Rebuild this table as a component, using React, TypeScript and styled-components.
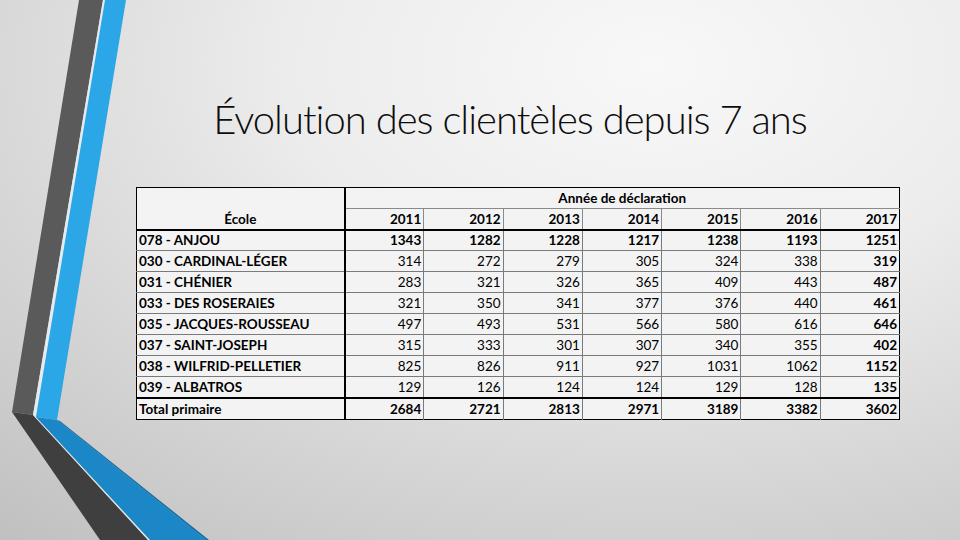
import React from "react";
import styled, { createGlobalStyle } from "styled-components";

const GlobalStyle = createGlobalStyle`
  html, body { margin: 0; padding: 0; }
  body { width: 960px; height: 540px; overflow: hidden; font-family: "Lato", "Liberation Sans", sans-serif; }
`;

const Slide = styled.div`
  position: relative;
  width: 960px;
  height: 540px;
  overflow: hidden;
  background: radial-gradient(ellipse 110% 120% at 68% 12%, #f8f8f8 0%, #ececec 35%, #d6d6d6 65%, #bdbdbd 100%);
`;

const Decor = styled.svg`
  position: absolute;
  left: 0;
  top: 0;
  width: 960px;
  height: 540px;
  pointer-events: none;
`;

const Content = styled.div`
  position: relative;
  margin-left: 136px;
  width: 764px;
  display: flex;
  flex-direction: column;
`;

const Title = styled.h1`
  margin: 0;
  padding: 96px 16px 0 0;
  height: 187px;
  box-sizing: border-box;
  text-align: center;
  font-family: "Lato", "Liberation Sans", sans-serif;
  font-weight: 300;
  font-size: 40px;
  line-height: 46px;
  color: #0d0d0d;
  letter-spacing: -1px;
  white-space: nowrap;
`;

const Table = styled.table`
  border-collapse: collapse;
  width: 764px;
  table-layout: fixed;
  background: #f3f3f3;
  border: 1.5px solid #000;
  font-family: "Lato", "Liberation Sans", sans-serif;
  font-size: 13.5px;
  color: #000;
`;

const HeadRow = styled.tr<{ $h: number }>`
  height: ${(p) => p.$h}px;
`;

const BodyRow = styled.tr<{ $h?: number }>`
  height: ${(p) => p.$h ?? 21}px;
`;

const GroupHead = styled.th`
  padding: 0 2px;
  font-weight: 700;
  text-align: center;
  vertical-align: middle;
  line-height: 18px;
  white-space: nowrap;
`;

const YearHead = styled.th<{ $first?: boolean }>`
  padding: 0 2px;
  font-weight: 700;
  text-align: right;
  vertical-align: middle;
  border-left: ${(p) => (p.$first ? "none" : "1px solid #8a8a8a")};
  border-top: 1px solid #8a8a8a;
  line-height: 18px;
  white-space: nowrap;
`;

const NameHead = styled.th`
  padding: 0 2px 1px;
  font-weight: 700;
  text-align: center;
  vertical-align: bottom;
  border-right: 2px solid #000;
  line-height: 18px;
`;

const Td = styled.td<{ $bold?: boolean; $name?: boolean; $thickTop?: boolean }>`
  padding: 0 2px;
  font-weight: ${(p) => (p.$bold || p.$name ? 700 : 400)};
  text-align: ${(p) => (p.$name ? "left" : "right")};
  border-top: ${(p) => (p.$thickTop ? "2px solid #000" : "1px solid #7a7a7a")};
  border-left: ${(p) => (p.$name ? "none" : "1px solid #7a7a7a")};
  border-right: ${(p) => (p.$name ? "2px solid #000" : "none")};
  line-height: 18px;
  white-space: nowrap;
`;

const years = [2011, 2012, 2013, 2014, 2015, 2016, 2017];

const rows: { name: string; values: number[] }[] = [
  { name: "078 - ANJOU", values: [1343, 1282, 1228, 1217, 1238, 1193, 1251] },
  { name: "030 - CARDINAL-LÉGER", values: [314, 272, 279, 305, 324, 338, 319] },
  { name: "031 - CHÉNIER", values: [283, 321, 326, 365, 409, 443, 487] },
  { name: "033 - DES ROSERAIES", values: [321, 350, 341, 377, 376, 440, 461] },
  { name: "035 - JACQUES-ROUSSEAU", values: [497, 493, 531, 566, 580, 616, 646] },
  { name: "037 - SAINT-JOSEPH", values: [315, 333, 301, 307, 340, 355, 402] },
  { name: "038 - WILFRID-PELLETIER", values: [825, 826, 911, 927, 1031, 1062, 1152] },
  { name: "039 - ALBATROS", values: [129, 126, 124, 124, 129, 128, 135] },
];

const totals = [2684, 2721, 2813, 2971, 3189, 3382, 3602];

export default function App() {
  return (
    <Slide>
      <GlobalStyle />
      <Decor viewBox="0 0 960 540">
        <polygon points="79,0 103,0 33,415 12,412" fill="#5a5a5a" />
        <polygon points="12,412 33,415 148,540 100,540" fill="#3f3f3f" />
        <polygon points="103,0 106,0 36,417 33,415" fill="#e4ecf2" />
        <polygon points="33,415 36,417 152,540 148,540" fill="#dfe7ec" />
        <polygon points="105,0 126,0 57,420 36,417" fill="#2ba6e6" />
        <polygon points="36,417 57,420 206,540 150,540" fill="#1b87c6" />
        <polygon points="57,420 60,421 209,540 206,540" fill="#146fa6" />
      </Decor>
      <Content>
        <Title>Évolution des clientèles depuis 7 ans</Title>
        <Table>
          <colgroup>
            <col style={{ width: 208 }} />
            {years.map((y) => (
              <col key={y} />
            ))}
          </colgroup>
          <thead>
            <HeadRow $h={21}>
              <NameHead rowSpan={2}>École</NameHead>
              <GroupHead colSpan={7}>Année de déclaration</GroupHead>
            </HeadRow>
            <HeadRow $h={21}>
              {years.map((y, i) => (
                <YearHead key={y} $first={i === 0}>
                  {y}
                </YearHead>
              ))}
            </HeadRow>
          </thead>
          <tbody>
            {rows.map((r, ri) => (
              <BodyRow key={r.name}>
                <Td $name $thickTop={ri === 0}>{r.name}</Td>
                {r.values.map((v, i) => (
                  <Td key={i} $bold={ri === 0 || i === 6} $thickTop={ri === 0}>
                    {v}
                  </Td>
                ))}
              </BodyRow>
            ))}
            <BodyRow $h={22}>
              <Td $name $thickTop>Total primaire</Td>
              {totals.map((v, i) => (
                <Td key={i} $bold $thickTop>
                  {v}
                </Td>
              ))}
            </BodyRow>
          </tbody>
        </Table>
      </Content>
    </Slide>
  );
}
